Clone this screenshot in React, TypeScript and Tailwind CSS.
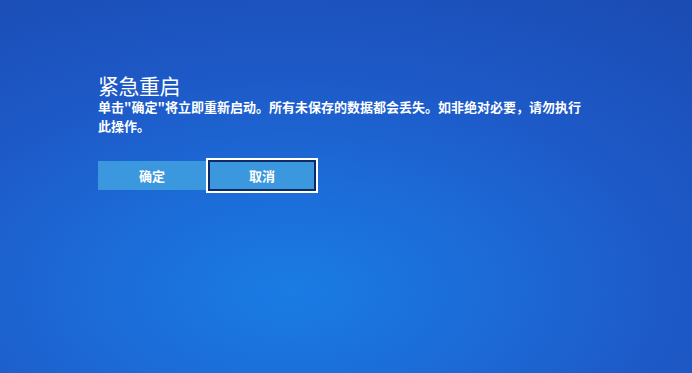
export default function App() {
  return (
    <div
      className="w-[692px] h-[373px] overflow-hidden bg-[radial-gradient(ellipse_90%_95%_at_42%_78%,#1a7ce4_0%,#1c6cd8_30%,#1d5ac8_60%,#1b4cb4_100%)] text-white"
      style={{ fontFamily: '"Noto Sans CJK SC", "Noto Sans", sans-serif' }}
    >
      <div className="pl-[98px] pt-[73px]">
        <h1 className="text-[21px] leading-[24px] font-normal tracking-[-0.5px]">紧急重启</h1>
        <p className="w-[490px] text-[13px] leading-[19px] font-semibold tracking-[0px]">
          单击"确定"将立即重新启动。所有未保存的数据都会丢失。如非绝对必要，请勿执行此操作。
        </p>
        <div className="mt-[23px] flex items-center">
          <button className="w-[108px] h-[29px] bg-[#3b98de] text-[13px] font-bold text-white">
            确定
          </button>
          <button className="w-[112px] h-[35px] border-2 border-white bg-[#3b98de] text-[13px] font-bold text-white">
            <span className="flex h-full w-full items-center justify-center border-2 border-[#0e2a66]">取消</span>
          </button>
        </div>
      </div>
    </div>
  );
}
